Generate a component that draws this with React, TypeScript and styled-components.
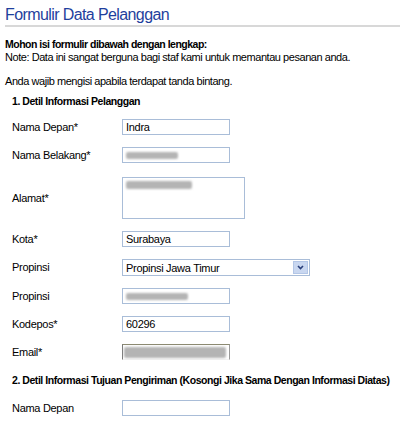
import React from "react";
import styled, { createGlobalStyle } from "styled-components";

const GlobalStyle = createGlobalStyle`
  body {
    margin: 0;
    background: #ffffff;
    font-family: "Liberation Sans", Arial, sans-serif;
    color: #000;
  }
`;

const Page = styled.div`
  width: 400px;
  height: 423px;
  overflow: hidden;
  padding-left: 5px;
  box-sizing: border-box;
`;

const Title = styled.h1`
  margin: 6px 0 0;
  font-size: 16px;
  line-height: 18px;
  font-weight: normal;
  letter-spacing: -0.6px;
  color: #1f3f9d;
`;

const Rule = styled.div`
  margin-top: 1px;
  height: 2px;
  background: #d8d8d8;
`;

const Text = styled.p<{ $bold?: boolean; $gap?: number }>`
  margin: ${(p) => p.$gap ?? 0}px 0 0;
  font-size: ${(p) => (p.$bold ? "10.5px" : "11px")};
  font-weight: ${(p) => (p.$bold ? "bold" : "normal")};
  letter-spacing: ${(p) => (p.$bold ? "-0.5px" : "-0.45px")};
  line-height: 13px;
  white-space: nowrap;
`;

const Section = styled.div`
  padding-left: 7px;
`;

const SectionTitle = styled.div<{ $top: number; $bottom: number }>`
  margin: ${(p) => p.$top}px 0 ${(p) => p.$bottom}px;
  font-size: 10.5px;
  font-weight: bold;
  letter-spacing: -0.45px;
  line-height: 13px;
  white-space: nowrap;
`;

const Rows = styled.div`
  display: flex;
  flex-direction: column;
  gap: 12px;
`;

const Row = styled.div<{ $extra?: number }>`
  display: grid;
  grid-template-columns: 110px auto;
  align-items: center;
  margin-top: ${(p) => p.$extra ?? 0}px;
`;

const Label = styled.label`
  font-size: 11px;
  letter-spacing: -0.3px;
  line-height: 13px;
`;

const Field = styled.div<{ $width?: number; $height?: number }>`
  position: relative;
  width: ${(p) => p.$width ?? 108}px;
  height: ${(p) => p.$height ?? 16}px;
  box-sizing: border-box;
  border: 1px solid #a9bdd8;
  background: #fff;
  padding: 0 3px;
  font-size: 11px;
  letter-spacing: -0.3px;
  line-height: 14px;
  display: flex;
  align-items: ${(p) => ((p.$height ?? 16) > 20 ? "flex-start" : "center")};
`;

const EmailField = styled(Field)`
  border-top: 1px solid #8c8a72;
  border-left: 1px solid #7a7a7a;
  border-right: 1px solid #9a9a9a;
  border-bottom: 1px solid #f4f4f4;
  padding: 0 1px;
`;

const Smudge = styled.span<{ $w: number; $h: number; $top?: number }>`
  display: block;
  width: ${(p) => p.$w}px;
  height: ${(p) => p.$h}px;
  margin-top: ${(p) => p.$top ?? 0}px;
  background: #b4b4b4;
  border-radius: 2px;
  filter: blur(0.8px);
`;

const SelectBox = styled(Field)`
  width: 188px;
  height: 17px;
  justify-content: space-between;
  padding-right: 1px;
`;

const ArrowButton = styled.span`
  width: 15px;
  height: 13px;
  background: #c9d7f0;
  border: 1px solid #b3c6e6;
  box-sizing: border-box;
  display: flex;
  align-items: center;
  justify-content: center;
`;

const Chevron = () => (
  <svg width="7" height="5" viewBox="0 0 7 5">
    <path d="M1 1 L3.5 3.5 L6 1" fill="none" stroke="#2a3f7a" strokeWidth="1.6" />
  </svg>
);

export default function App() {
  return (
    <Page>
      <GlobalStyle />
      <Title>Formulir Data Pelanggan</Title>
      <Rule />
      <Text $bold $gap={11}>
        Mohon isi formulir dibawah dengan lengkap:
      </Text>
      <Text>Note: Data ini sangat berguna bagi staf kami untuk memantau pesanan anda.</Text>
      <Text $gap={11}>Anda wajib mengisi apabila terdapat tanda bintang.</Text>
      <Section>
        <SectionTitle $top={7} $bottom={11}>
          1. Detil Informasi Pelanggan
        </SectionTitle>
        <Rows>
          <Row>
            <Label>Nama Depan*</Label>
            <Field>Indra</Field>
          </Row>
          <Row>
            <Label>Nama Belakang*</Label>
            <Field>
              <Smudge $w={52} $h={7} />
            </Field>
          </Row>
          <Row $extra={2}>
            <Label>Alamat*</Label>
            <Field $width={123} $height={42}>
              <Smudge $w={66} $h={8} $top={3} />
            </Field>
          </Row>
          <Row>
            <Label>Kota*</Label>
            <Field>Surabaya</Field>
          </Row>
          <Row>
            <Label>Propinsi</Label>
            <SelectBox>
              Propinsi Jawa Timur
              <ArrowButton>
                <Chevron />
              </ArrowButton>
            </SelectBox>
          </Row>
          <Row>
            <Label>Propinsi</Label>
            <Field>
              <Smudge $w={62} $h={7} />
            </Field>
          </Row>
          <Row>
            <Label>Kodepos*</Label>
            <Field>60296</Field>
          </Row>
          <Row>
            <Label>Email*</Label>
            <EmailField>
              <Smudge $w={102} $h={11} />
            </EmailField>
          </Row>
        </Rows>
        <SectionTitle $top={14} $bottom={13}>
          2. Detil Informasi Tujuan Pengiriman (Kosongi Jika Sama Dengan Informasi Diatas)
        </SectionTitle>
        <Rows>
          <Row>
            <Label>Nama Depan</Label>
            <Field />
          </Row>
        </Rows>
      </Section>
    </Page>
  );
}
